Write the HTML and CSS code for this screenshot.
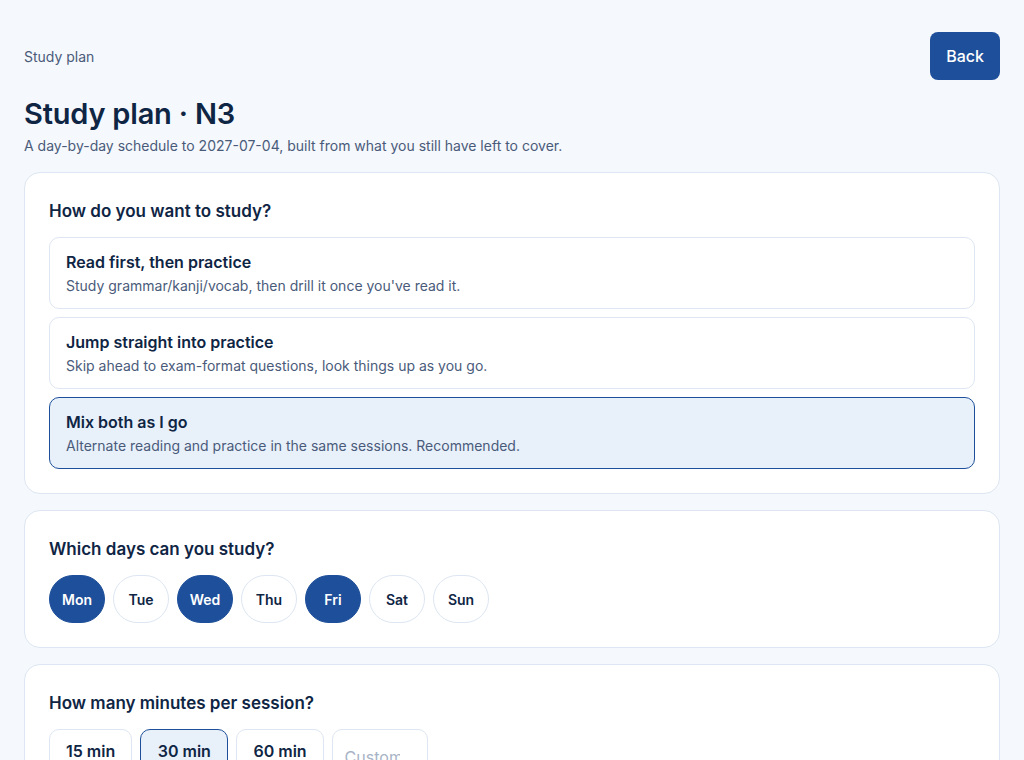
FILE: index.html
```html
<!DOCTYPE html>
<html lang="en">
<head>
  <meta charset="UTF-8">
  <meta name="viewport" content="width=device-width, initial-scale=1.0">
  <title>Study plan · N3</title>
  <link rel="stylesheet" href="styles.css">
</head>
<body>
  <div class="page">
    <header class="topbar">
      <div class="crumb">Study plan</div>
      <button class="back-btn">Back</button>
    </header>

    <h1>Study plan · N3</h1>
    <p class="lead">A day-by-day schedule to 2027-07-04, built from what you still have left to cover.</p>

    <section class="card">
      <h2>How do you want to study?</h2>
      <div class="options">
        <label class="option">
          <div class="option-title">Read first, then practice</div>
          <div class="option-desc">Study grammar/kanji/vocab, then drill it once you've read it.</div>
        </label>
        <label class="option">
          <div class="option-title">Jump straight into practice</div>
          <div class="option-desc">Skip ahead to exam-format questions, look things up as you go.</div>
        </label>
        <label class="option selected">
          <div class="option-title">Mix both as I go</div>
          <div class="option-desc">Alternate reading and practice in the same sessions. Recommended.</div>
        </label>
      </div>
    </section>

    <section class="card">
      <h2>Which days can you study?</h2>
      <div class="days">
        <button class="day on">Mon</button>
        <button class="day">Tue</button>
        <button class="day on">Wed</button>
        <button class="day">Thu</button>
        <button class="day on">Fri</button>
        <button class="day">Sat</button>
        <button class="day">Sun</button>
      </div>
    </section>

    <section class="card">
      <h2>How many minutes per session?</h2>
      <div class="minutes">
        <button class="min-btn">15 min</button>
        <button class="min-btn selected">30 min</button>
        <button class="min-btn">60 min</button>
        <input class="min-custom" type="text" placeholder="Custom...">
      </div>
    </section>
  </div>
</body>
</html>
```

FILE: styles.css
```css
body {
  margin: 0;
  padding: 0;
  background-color: #f5f8fc;
  color: #0f2544;
  font-family: 'Inter', 'Helvetica', 'Arial', sans-serif;
}
.page {
  padding: 32px 24px 24px;
}
.topbar {
  display: flex;
  align-items: center;
  justify-content: space-between;
}
.crumb {
  font-size: 14px;
  color: #4a5b7a;
}
.back-btn {
  background-color: #1e4f9a;
  color: white;
  border: none;
  border-radius: 8px;
  height: 48px;
  padding: 0 16px;
  font-family: inherit;
  font-size: 16px;
  font-weight: 500;
  cursor: pointer;
}
h1 {
  margin: 16px 0 0;
  font-size: 29px;
  line-height: 36px;
  font-weight: 600;
  letter-spacing: -0.2px;
}
.lead {
  margin: 4px 0 16px;
  font-size: 14px;
  line-height: 20px;
  color: #4a5b7a;
}
.card {
  background-color: white;
  border: 1px solid #dde6f2;
  border-radius: 16px;
  padding: 24px;
  margin-bottom: 16px;
}
h2 {
  margin: 0 0 12px;
  font-size: 17px;
  line-height: 28px;
  font-weight: 600;
}
.options {
  display: flex;
  flex-direction: column;
  gap: 8px;
}
.option {
  display: block;
  border: 1px solid #dde6f2;
  border-radius: 10px;
  padding: 13px 16px 12px;
  cursor: pointer;
}
.option.selected {
  background-color: #e8f0fa;
  border-color: #1e4f9a;
}
.option-title {
  font-size: 16px;
  line-height: 22px;
  font-weight: 600;
  margin-bottom: 3px;
}
.option-desc {
  font-size: 14px;
  line-height: 20px;
  color: #4a5b7a;
}
.days {
  display: flex;
  gap: 8px;
}
.day {
  width: 56px;
  height: 48px;
  padding: 0;
  border-radius: 999px;
  border: 1px solid #dde6f2;
  background-color: white;
  color: #0f2544;
  font-family: inherit;
  font-size: 14px;
  font-weight: 600;
  cursor: pointer;
}
.day.on {
  background-color: #1e4f9a;
  border-color: #1e4f9a;
  color: white;
}
.minutes {
  display: flex;
  align-items: flex-start;
  gap: 8px;
}
.min-btn {
  height: 44px;
  padding: 0 16px;
  border: 1px solid #dde6f2;
  border-radius: 10px;
  background-color: white;
  color: #0f2544;
  font-family: inherit;
  font-size: 16px;
  font-weight: 600;
  cursor: pointer;
}
.min-btn.selected {
  background-color: #e8f0fa;
  border-color: #1e4f9a;
  padding: 0 16.5px;
}
.min-custom {
  width: 96px;
  height: 56px;
  box-sizing: border-box;
  padding: 0 27px 0 12px;
  border: 1px solid #dde6f2;
  border-radius: 10px;
  font-family: inherit;
  font-size: 16px;
  color: #0f2544;
}
.min-custom::placeholder {
  color: #a7b3c6;
}
```
